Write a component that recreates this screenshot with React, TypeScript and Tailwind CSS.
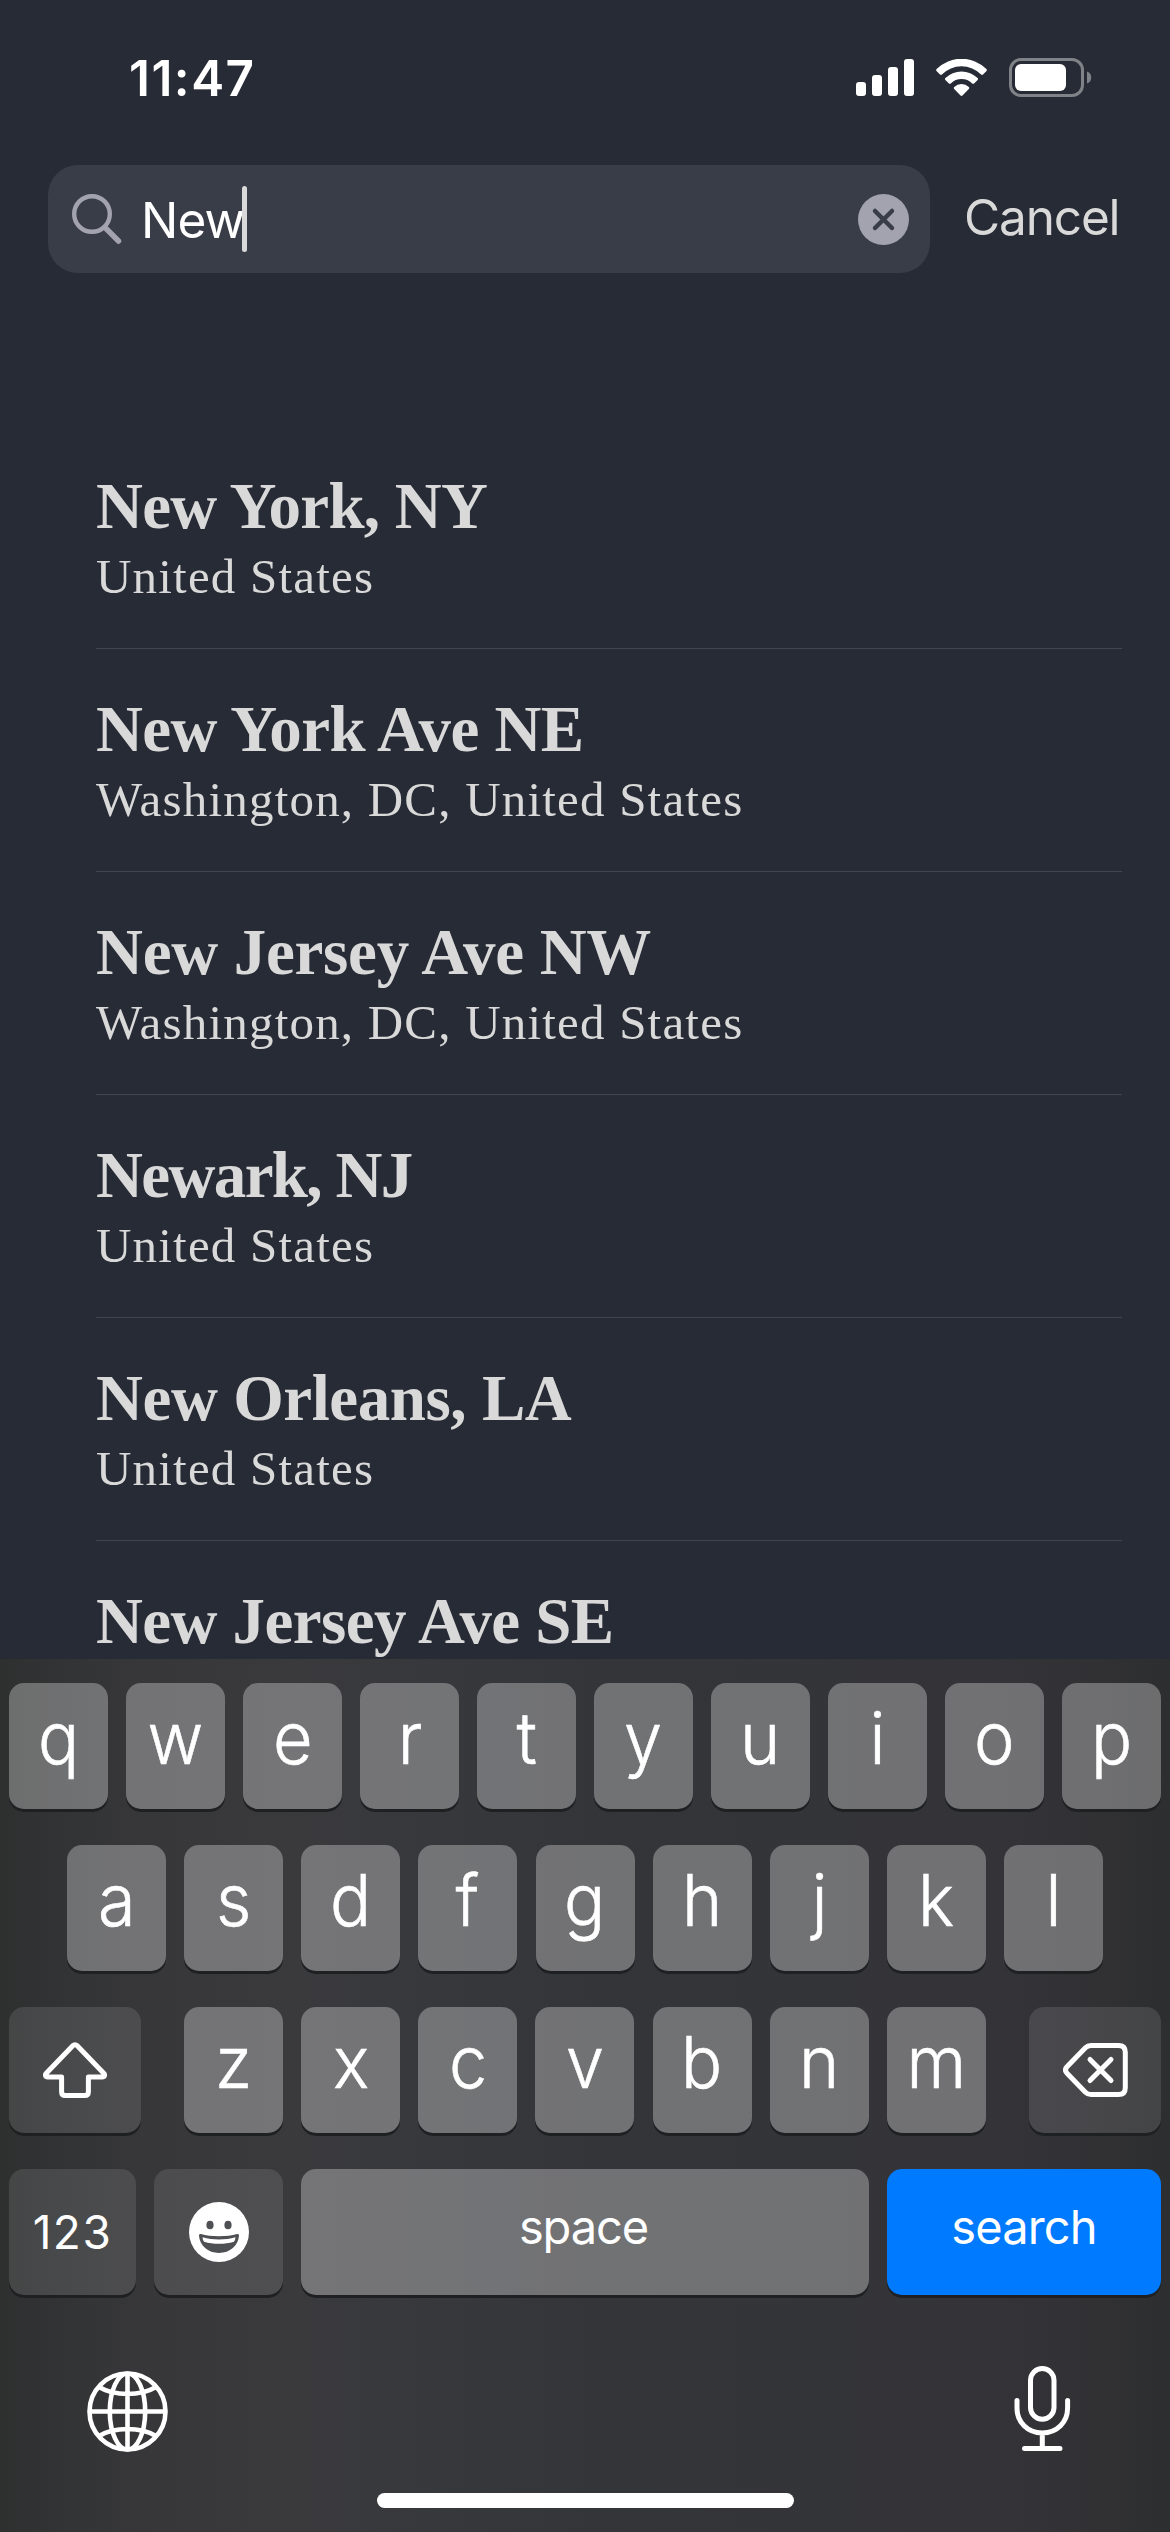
import type { ReactNode } from "react";

type Place = { name: string; region?: string; tracking: string };

const US = "United States";
const DC = "Washington, DC, United States";

const places: Place[] = [
  { name: "New York, NY", region: US, tracking: "tracking-[-0.75px]" },
  { name: "New York Ave NE", region: DC, tracking: "tracking-[-0.6px]" },
  { name: "New Jersey Ave NW", region: DC, tracking: "tracking-[-0.3px]" },
  { name: "Newark, NJ", region: US, tracking: "tracking-[-1.65px]" },
  { name: "New Orleans, LA", region: US, tracking: "tracking-[-0.45px]" },
  { name: "New Jersey Ave SE", tracking: "tracking-[-0.6px]" },
];

function SignalIcon() {
  return (
    <svg width="59" height="37" viewBox="0 0 59 37" fill="white">
      <rect x="0" y="23" width="10" height="14" rx="3" />
      <rect x="16" y="16" width="10" height="21" rx="3" />
      <rect x="32" y="8" width="10" height="29" rx="3" />
      <rect x="48" y="0" width="10" height="37" rx="3" />
    </svg>
  );
}

function WifiIcon() {
  return (
    <svg width="51" height="37" viewBox="0 0 51 37" fill="white">
      <path d="M.6 10.1a35 35 0 0 1 49.8 0c.6.6.6 1.3.1 1.9l-3.5 3.5c-.6.6-1.3.6-1.9 0a27.6 27.6 0 0 0-39.2 0c-.6.6-1.3.6-1.9 0L.5 12c-.5-.6-.5-1.3.1-1.9Z" />
      <path d="M9.4 19a23 23 0 0 1 32.2 0c.6.6.6 1.3 0 1.9l-3.5 3.5c-.6.6-1.3.6-1.9 0a15.3 15.3 0 0 0-21.4 0c-.6.6-1.3.6-1.9 0l-3.5-3.5c-.6-.6-.6-1.3 0-1.9Z" />
      <path d="M18.2 28a10.7 10.7 0 0 1 14.6 0c.6.6.6 1.3 0 1.9l-6.3 6.6c-.6.6-1.4.6-2 0l-6.3-6.6c-.6-.6-.6-1.3 0-1.9Z" />
    </svg>
  );
}

function BatteryIcon() {
  return (
    <svg width="83" height="39" viewBox="0 0 83 39">
      <rect x="1.5" y="1.5" width="72" height="36" rx="10.5" fill="none" stroke="#7f8287" strokeWidth="3" />
      <rect x="6" y="6" width="51" height="27" rx="6" fill="white" />
      <path d="M78 13.5c3 1 4.2 3.3 4.2 6s-1.2 5-4.2 6Z" fill="#7f8287" />
    </svg>
  );
}

function MagnifierIcon() {
  return (
    <svg width="50" height="50" viewBox="0 0 50 50" fill="none" stroke="#a3a3b0" strokeLinecap="round">
      <circle cx="20" cy="20" r="17.8" strokeWidth="4.4" />
      <path d="m33.5 34 13 13" strokeWidth="5.5" />
    </svg>
  );
}

function ClearIcon() {
  return (
    <svg width="51" height="51" viewBox="0 0 51 51">
      <circle cx="25.5" cy="25.5" r="25.5" fill="#a3a3b0" />
      <path d="m17 17 17 17M34 17 17 34" stroke="#393d48" strokeWidth="4.5" strokeLinecap="round" />
    </svg>
  );
}

function ShiftIcon() {
  return (
    <svg width="64" height="56" viewBox="0 0 64 56" fill="none" stroke="white" strokeWidth="5" strokeLinejoin="round">
      <path d="M30 3.6 3.3 31.2c-1.7 1.9-.7 3.9 1.4 3.9h13.9v14.6c0 2.5 1.3 3.8 3.8 3.8h19.2c2.5 0 3.8-1.3 3.8-3.8V35.1h13.9c2.1 0 3.1-2 1.4-3.9L34 3.6c-1.2-1.2-2.8-1.2-4 0Z" />
    </svg>
  );
}

function DeleteIcon() {
  return (
    <svg width="65" height="54" viewBox="0 0 65 54" fill="none" stroke="white" strokeWidth="5" strokeLinejoin="round" strokeLinecap="round">
      <path d="M28 2.5h27.5c4.6 0 6.8 2.2 6.8 6.8v35.4c0 4.6-2.2 6.8-6.8 6.8H28c-2.3 0-4-.7-5.6-2.3L4 30.2c-2-2.1-2-4.3 0-6.4L22.4 4.8C24 3.2 25.7 2.5 28 2.5Z" />
      <path d="m27 16.5 21 21M48 16.5l-21 21" />
    </svg>
  );
}

function EmojiIcon() {
  return (
    <svg width="60" height="60" viewBox="0 0 60 60">
      <circle cx="30" cy="30" r="30" fill="white" />
      <ellipse cx="21" cy="23" rx="3.6" ry="4.3" fill="#4f5054" />
      <ellipse cx="39" cy="23" rx="3.6" ry="4.3" fill="#4f5054" />
      <path d="M12 32c5 1.5 11 2.2 18 2.2S43 33.5 48 32c1.4-.4 2.1.3 2 1.8C49.3 43.5 41 51 30 51S10.7 43.5 10 33.8c-.1-1.5.6-2.2 2-1.8Z" fill="#4f5054" />
      <path d="M13.6 35.2c5.2 1.6 10.4 2.2 16.4 2.2s11.2-.6 16.4-2.2c0 1.7-.5 3.3-1.5 4.5-4.7 1.5-9.4 2.1-14.9 2.1s-10.2-.6-14.9-2.1c-1-1.2-1.5-2.8-1.5-4.5Z" fill="white" />
    </svg>
  );
}

function GlobeIcon() {
  return (
    <svg width="81" height="81" viewBox="0 0 81 81" fill="none" stroke="white" strokeWidth="4.6">
      <circle cx="40.5" cy="40.5" r="38" />
      <ellipse cx="40.5" cy="40.5" rx="17.7" ry="38" />
      <path d="M40.5 2.5v76M2.5 40.5h76M12 16c7.5 4.5 17 7 28.5 7S61.5 20.5 69 16M12 65c7.5-4.5 17-7 28.5-7s21 2.5 28.5 7" />
    </svg>
  );
}

function MicIcon() {
  return (
    <svg width="57" height="86" viewBox="0 0 57 86" fill="none" stroke="white" strokeWidth="5" strokeLinecap="round">
      <rect x="16.5" y="2.6" width="23.5" height="50.6" rx="11.75" />
      <path d="M3 34.5v7.5c0 14 10.5 24.9 25.3 24.9s25.3-10.900 25.3-24.9v-7.5M28.3 67V82M10.5 82.500h35.500" />
    </svg>
  );
}

function Key({ children, className }: { children: ReactNode; className: string }) {
  return (
    <div
      className={`flex h-[126px] shrink-0 items-center justify-center rounded-[15px] text-white shadow-[0_3px_0_#1e2022] ${className}`}
    >
      {children}
    </div>
  );
}

function Letters({ letters }: { letters: string }) {
  return (
    <>
      {letters.split("").map((letter) => (
        <Key key={letter} className="w-[99px] bg-white/30 pb-[17px] text-[72px] leading-[87px] font-light">
          <span className="scale-x-95 [-webkit-text-stroke:0.6px_white]">{letter}</span>
        </Key>
      ))}
    </>
  );
}

function Keyboard() {
  return (
    <div className="flex h-[873px] shrink-0 flex-col bg-[linear-gradient(90deg,#2e2f2f_0%,#323334_5%,#37373a_12%,#3a3a3d_25%,#37383b_38%,#343539_52%,#343438_85%,#313134_94%,#2d2e2f_100%)] px-[9px] pt-6">
      <div className="flex justify-between">
        <Letters letters="qwertyuiop" />
      </div>
      <div className="mt-9 flex justify-between px-[58px]">
        <Letters letters="asdfghjkl" />
      </div>
      <div className="mt-9 flex justify-between">
        <Key className="w-[132px] bg-white/11">
          <ShiftIcon />
        </Key>
        <div className="flex w-[802px] justify-between">
          <Letters letters="zxcvbnm" />
        </div>
        <Key className="w-[132px] bg-white/11">
          <DeleteIcon />
        </Key>
      </div>
      <div className="mt-9 flex justify-between">
        <Key className="w-[127px] bg-white/11 text-[46px] tracking-[1.5px]">123</Key>
        <Key className="w-[129px] bg-white/11">
          <EmojiIcon />
        </Key>
        <Key className="w-[568px] bg-white/30 pr-[3px] pb-[9px] text-[47px] tracking-[-1.1px]">space</Key>
        <Key className="w-[274px] bg-[#007aff] pb-[9px] text-[47px] tracking-[-0.85px]">search</Key>
      </div>
      <div className="mt-[71px] flex items-start justify-between pr-[90px] pl-[78px]">
        <div className="pt-[5px]">
          <GlobeIcon />
        </div>
        <MicIcon />
      </div>
      <div className="mt-[41px] h-[15px] w-[417px] shrink-0 self-center rounded-full bg-white" />
    </div>
  );
}

export default function App() {
  return (
    <div className="flex h-[2532px] w-[1170px] flex-col overflow-hidden bg-[#272b35] font-['Inter',sans-serif]">
      <header className="flex h-[165px] shrink-0 items-start justify-between pr-[78px] pl-[129px]">
        <div className="pt-12 text-[49.5px] leading-[60px] font-semibold tracking-[1.5px] text-white">11:47</div>
        <div className="flex items-center pt-[58px]">
          <SignalIcon />
          <div className="ml-[21px]">
            <WifiIcon />
          </div>
          <div className="ml-[22px]">
            <BatteryIcon />
          </div>
        </div>
      </header>

      <div className="flex h-[108px] shrink-0 items-center pl-12">
        <div className="flex h-full w-[882px] items-center rounded-[30px] bg-[#393d48] pr-[21px] pl-6">
          <MagnifierIcon />
          <span className="ml-[19px] pt-0.5 text-[49.5px] leading-[60px] tracking-[-0.9px] text-white">New</span>
          <div className="-ml-0.5 h-[66px] w-[5px] rounded-full bg-[#d9d9d9]" />
          <div className="ml-auto">
            <ClearIcon />
          </div>
        </div>
        <span className="ml-[34px] pb-1 text-[49.5px] leading-[60px] tracking-[-1.15px] text-[#d9d9d9]">Cancel</span>
      </div>

      <ul className="mt-[153px] min-h-0 flex-1 overflow-hidden pr-12 pl-24 font-['Liberation_Serif',serif] text-[#d9d9d9]">
        {places.map((place) => (
          <li key={place.name} className="h-[223px] border-b border-[#42454b] pt-11 last:h-auto last:border-b-0">
            <div className={`text-[65px] leading-[72px] font-bold ${place.tracking}`}>{place.name}</div>
            {place.region && <div className="mt-[7px] text-[49px] leading-[55px] tracking-[1.2px]">{place.region}</div>}
          </li>
        ))}
      </ul>

      <Keyboard />
    </div>
  );
}
